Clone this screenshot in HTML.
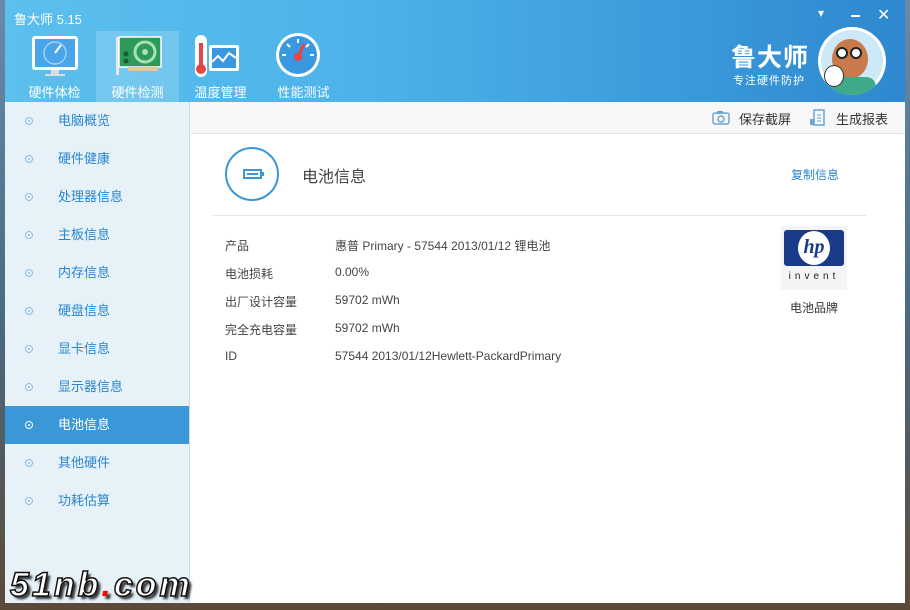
<!DOCTYPE html>
<html><head><meta charset="utf-8"><style>
*{margin:0;padding:0;box-sizing:border-box}
body{width:910px;height:610px;overflow:hidden;font-family:"Liberation Sans","Noto Sans CJK SC",sans-serif;background:linear-gradient(180deg,#6a8ba8 0%,#4a6b86 50%,#5b4a38 100%);position:relative}
.win{position:absolute;left:5px;top:0;width:900px;height:603px;background:#fff;overflow:hidden}
.hdr{position:absolute;left:0;top:0;width:900px;height:102px;background:linear-gradient(90deg,#5cc0ee 0%,#4cb2e8 40%,#3a9ada 75%,#2e88cf 100%)}
.title{position:absolute;left:9px;top:9px;color:#fff;font-size:13px}
.tab{position:absolute;top:31px;width:83px;height:71px;color:#fff;font-size:13px;text-align:center}
.tab .lb{position:absolute;left:0;right:0;top:51px}
.tab.sel{background:rgba(255,255,255,.18)}
.side{position:absolute;left:0;top:102px;width:185px;height:501px;background:#e6f1f8;border-right:1px solid #c7dced}
.it{position:absolute;left:0;width:184px;height:38px;font-size:13px;color:#2a86d0;line-height:38px;white-space:nowrap}
.it .d{position:absolute;left:20px;top:15px;width:8px;height:8px;border:1px solid #8dbde4;border-radius:50%}
.it .d:after{content:"";position:absolute;left:2px;top:2px;width:2px;height:2px;background:#8dbde4;border-radius:50%}
.it span{position:absolute;left:53px}
.it.sel{background:#3a97d8;color:#fff}
.it.sel .d{border-color:#fff}.it.sel .d:after{background:#fff}
.tb{position:absolute;left:186px;top:102px;width:714px;height:32px;background:#f7f7f7;border-bottom:1px solid #e4e4e4;font-size:13px;color:#333;white-space:nowrap}
.main{position:absolute;left:186px;top:134px;width:714px;height:460px;font-size:12px;color:#444;white-space:nowrap}
.row{position:absolute;left:34px;white-space:nowrap}
.row b{font-weight:normal;position:absolute;left:110px}
</style></head><body>
<div class="win">
<div class="hdr">
<div class="title">鲁大师 5.15</div>
<div class="tab" style="left:8px"><svg width="83" height="50"><rect x="19" y="5" width="46" height="34" rx="3" fill="#fff"/><rect x="22" y="8" width="40" height="28" fill="#4aa4ea"/><circle cx="42" cy="22" r="11" fill="none" stroke="#9fd0f5" stroke-width="1.5"/><line x1="42" y1="22" x2="48" y2="14" stroke="#fff" stroke-width="2"/><rect x="38" y="39" width="8" height="4" fill="#ddd"/><rect x="32" y="43" width="20" height="2" fill="#ddd"/></svg><div class="lb">硬件体检</div></div>
<div class="tab sel" style="left:91px"><svg width="83" height="50"><rect x="20" y="6" width="3" height="38" fill="#e8e8e8"/><rect x="23" y="6" width="42" height="30" fill="#2e9a5a" stroke="#fff" stroke-width="1.5"/><circle cx="49" cy="21" r="10" fill="none" stroke="#a9e0b8" stroke-width="3"/><circle cx="49" cy="21" r="3" fill="#a9e0b8"/><circle cx="30" cy="23" r="2.5" fill="#1a5a30"/><circle cx="30" cy="30" r="2.5" fill="#1a5a30"/><rect x="32" y="36" width="30" height="4" fill="#e8c89a"/></svg><div class="lb">硬件检测</div></div>
<div class="tab" style="left:174px"><svg width="83" height="50"><rect x="16" y="4" width="12" height="42" rx="6" fill="#fff"/><rect x="20" y="12" width="4" height="24" fill="#e64545"/><circle cx="22" cy="38" r="5" fill="#e64545"/><rect x="30" y="14" width="30" height="26" rx="2" fill="#fff"/><rect x="33" y="17" width="24" height="20" fill="#3a98e0"/><polyline points="33,31 39,25 44,30 50,22 57,27" fill="none" stroke="#fff" stroke-width="2"/></svg><div class="lb">温度管理</div></div>
<div class="tab" style="left:257px"><svg width="83" height="50"><circle cx="36" cy="24" r="22" fill="#fff"/><circle cx="36" cy="24" r="19" fill="#3a98e0"/><path d="M20 24h4M48 24h4M36 8v4M25 13l3 3M47 13l-3 3" stroke="#fff" stroke-width="2"/><line x1="36" y1="26" x2="42" y2="13" stroke="#f04040" stroke-width="3"/><circle cx="36" cy="26" r="4" fill="#f04040"/></svg><div class="lb">性能测试</div></div>
<div style="position:absolute;left:813px;top:6px;color:#fff;font-size:12px">▾</div>
<div style="position:absolute;left:846px;top:15px;width:9px;height:2px;background:#fff"></div>
<div style="position:absolute;left:872px;top:5px;color:#fff;font-size:16px">✕</div>
<div style="position:absolute;left:726px;top:38px;color:#fff;font-size:25px;font-weight:bold;letter-spacing:1px;white-space:nowrap">鲁大师</div>
<div style="position:absolute;left:728px;top:72px;color:#fff;font-size:11px;letter-spacing:1px;white-space:nowrap">专注硬件防护</div>
<div style="position:absolute;left:813px;top:27px;width:68px;height:68px;border-radius:50%;background:#fff;overflow:hidden"><div style="position:absolute;left:3px;top:3px;width:62px;height:62px;border-radius:50%;background:#cde8f6"></div><div style="position:absolute;left:14px;top:12px;width:36px;height:40px;border-radius:50%;background:#c87a4a"></div><div style="position:absolute;left:10px;top:50px;width:48px;height:20px;background:#3fa98a;border-radius:10px"></div><div style="position:absolute;left:18px;top:20px;width:12px;height:12px;border:2px solid #222;border-radius:50%;background:#fff"></div><div style="position:absolute;left:32px;top:20px;width:12px;height:12px;border:2px solid #222;border-radius:50%;background:#fff"></div><div style="position:absolute;left:6px;top:38px;width:20px;height:22px;border:1px solid #333;border-radius:50%;background:#fff"></div></div>
</div>
<div class="side">
<div class="it" style="top:0"><i class="d"></i><span>电脑概览</span></div>
<div class="it" style="top:38px"><i class="d"></i><span>硬件健康</span></div>
<div class="it" style="top:76px"><i class="d"></i><span>处理器信息</span></div>
<div class="it" style="top:114px"><i class="d"></i><span>主板信息</span></div>
<div class="it" style="top:152px"><i class="d"></i><span>内存信息</span></div>
<div class="it" style="top:190px"><i class="d"></i><span>硬盘信息</span></div>
<div class="it" style="top:228px"><i class="d"></i><span>显卡信息</span></div>
<div class="it" style="top:266px"><i class="d"></i><span>显示器信息</span></div>
<div class="it sel" style="top:304px"><i class="d"></i><span>电池信息</span></div>
<div class="it" style="top:342px"><i class="d"></i><span>其他硬件</span></div>
<div class="it" style="top:380px"><i class="d"></i><span>功耗估算</span></div>
</div>
<div class="tb">
<svg style="position:absolute;left:521px;top:8px" width="18" height="15"><rect x="1" y="3" width="16" height="11" rx="2" fill="none" stroke="#6aa6d6" stroke-width="1.5"/><rect x="5" y="1" width="6" height="3" fill="#6aa6d6"/><circle cx="9" cy="9" r="3" fill="none" stroke="#6aa6d6" stroke-width="1.5"/></svg>
<div style="position:absolute;left:548px;top:7px">保存截屏</div>
<svg style="position:absolute;left:618px;top:7px" width="16" height="17"><rect x="5" y="1" width="10" height="15" fill="none" stroke="#6aa6d6" stroke-width="1.5"/><rect x="1" y="10" width="4" height="6" fill="#6aa6d6"/><path d="M8 6h4M8 9h4M8 12h4" stroke="#6aa6d6"/></svg>
<div style="position:absolute;left:645px;top:7px">生成报表</div>
</div>
<div class="main">
<div style="position:absolute;left:34px;top:13px;width:54px;height:54px;border:2px solid #3a97d8;border-radius:50%"><div style="position:absolute;left:16px;top:20px;width:19px;height:10px;border:2px solid #3a97d8;background:#fff"></div><div style="position:absolute;left:20px;top:24px;width:11px;height:2px;background:#3a97d8"></div><div style="position:absolute;left:35px;top:23px;width:2px;height:4px;background:#3a97d8"></div></div>
<div style="position:absolute;left:111px;top:29px;font-size:16px;color:#444">电池信息</div>
<div style="position:absolute;left:600px;top:32px;font-size:12px;color:#2a86d0">复制信息</div>
<div style="position:absolute;left:22px;top:81px;width:653px;height:1px;background:#e6e6e6"></div>
<div class="row" style="top:103px">产品<b>惠普 Primary - 57544 2013/01/12 锂电池</b></div>
<div class="row" style="top:131px">电池损耗<b>0.00%</b></div>
<div class="row" style="top:159px">出厂设计容量<b>59702 mWh</b></div>
<div class="row" style="top:187px">完全充电容量<b>59702 mWh</b></div>
<div class="row" style="top:215px">ID<b>57544 2013/01/12Hewlett-PackardPrimary</b></div>
<div style="position:absolute;left:590px;top:92px;width:66px;height:64px;background:#f4f4f4"><div style="position:absolute;left:3px;top:4px;width:60px;height:36px;background:#1a3a8a;border-radius:3px"></div><div style="position:absolute;left:17px;top:5px;width:32px;height:34px;border-radius:50%;background:#fff;color:#1a3a8a;font:italic bold 20px 'Liberation Serif',serif;text-align:center;line-height:32px">hp</div><div style="position:absolute;left:0;right:0;top:45px;text-align:center;font-size:10px;letter-spacing:4px;color:#222">invent</div></div>
<div style="position:absolute;left:599px;top:165px;font-size:12px;color:#333">电池品牌</div>
</div>
<div style="position:absolute;left:5px;top:566px;font:italic 900 34px 'Liberation Sans',sans-serif;color:#fff;-webkit-text-stroke:1.5px #111;text-shadow:3px 3px 2px #333;white-space:nowrap;letter-spacing:3px">51nb<span style="color:#f00;-webkit-text-stroke:0">.</span>com</div>
</div>
</body></html>
